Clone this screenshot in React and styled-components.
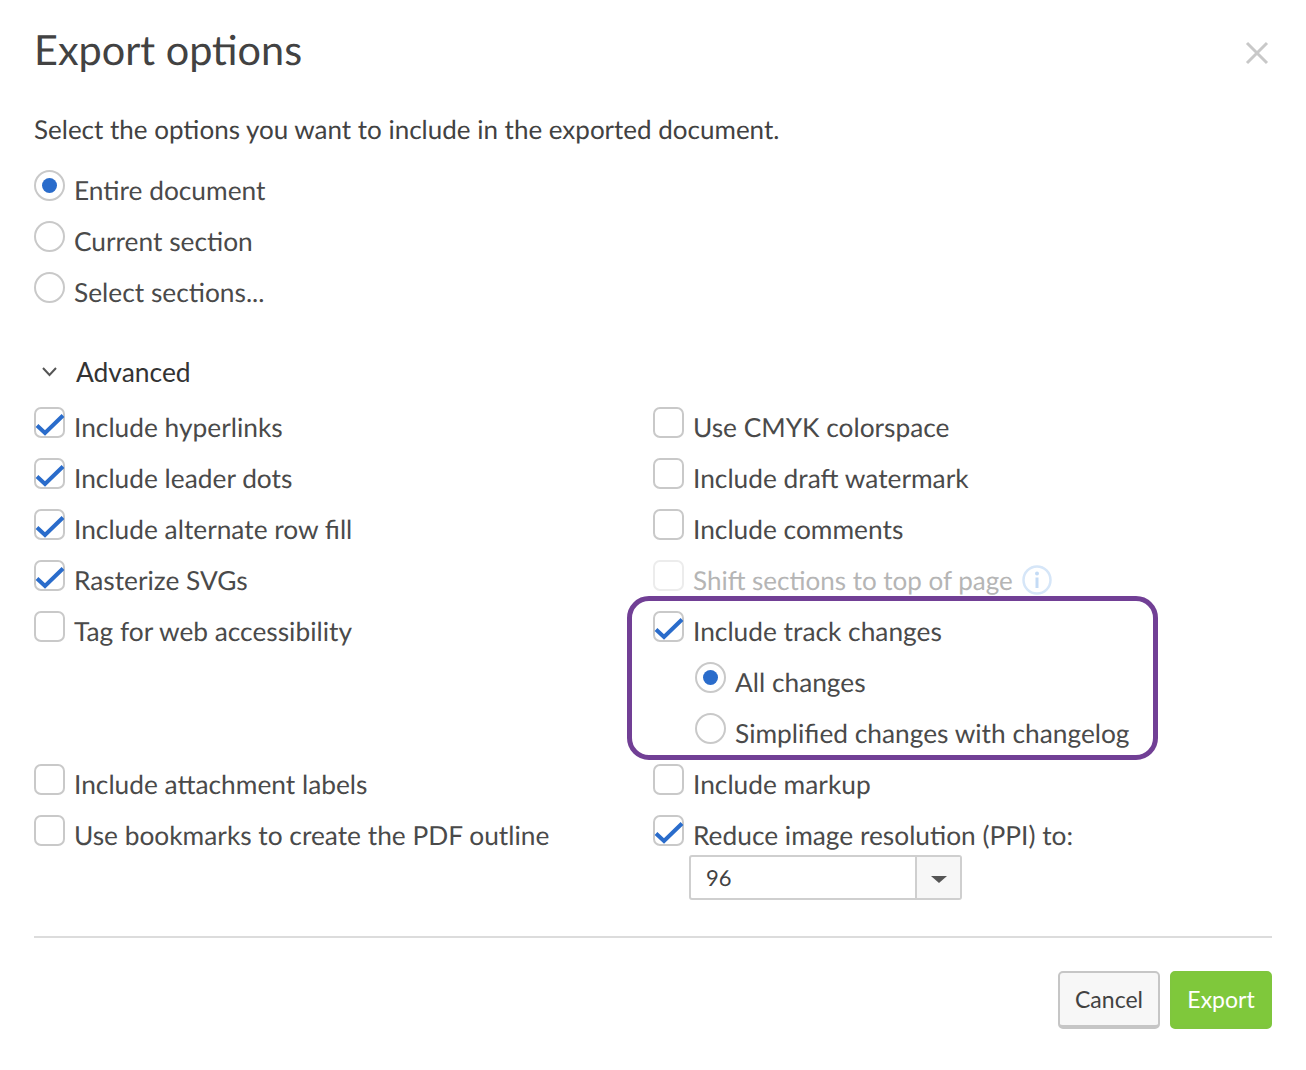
import React from 'react'
import styled, { createGlobalStyle } from 'styled-components'

const Global = createGlobalStyle`
  body {
    margin: 0;
    background: #fff;
    font-family: Lato, "Liberation Sans", sans-serif;
    color: #4a4a4a;
    text-rendering: geometricPrecision;
  }
`

const Dialog = styled.div`
  width: 1238px;
  height: 1070px;
  padding: 0 34px;
`

const Header = styled.header`
  height: 102px;
  display: flex;
  align-items: center;
  justify-content: space-between;
`

const Title = styled.h1`
  margin: -4px 0 0;
  font-size: 41.4px;
  font-weight: 400;
  color: #424242;
`

const Close = styled.button`
  width: 26px;
  height: 26px;
  margin: 3px 2px 0 0;
  padding: 0;
  border: 0;
  background: none;
  display: flex;
`

const Intro = styled.p`
  margin: 0 0 7px;
  height: 55px;
  line-height: 55px;
  font-size: 26px;
  color: #424242;
`

const Section = styled.div`
  display: flex;
  flex-direction: column;
`

const Row = styled.label`
  height: 51px;
  display: flex;
  align-items: center;
  gap: 9px;
  font-size: ${p => (p.$disabled ? '26px' : '26.3px')};
  padding-left: ${p => (p.$nested ? '42px' : '0')};
  color: ${p => (p.$disabled ? '#b5b5b5' : '#4a4a4a')};
`

const Box = styled.span`
  width: 31px;
  height: 31px;
  box-sizing: border-box;
  margin-top: -8px;
  flex: none;
  border: 2px solid ${p => (p.$disabled ? '#ececec' : '#c9c9c9')};
  border-radius: ${p => (p.$round ? '50%' : '7px')};
  display: flex;
  align-items: center;
  justify-content: center;
  position: relative;
`

const Dot = styled.span`
  width: 15px;
  height: 15px;
  border-radius: 50%;
  background: #2a6ccb;
`

const Tick = styled.svg`
  position: absolute;
  left: -2px;
  top: -2px;
  overflow: visible;
`

const Advanced = styled.button`
  margin-top: 29px;
  padding: 0;
  height: 51px;
  border: 0;
  background: none;
  display: flex;
  align-items: center;
  gap: 10px;
  font-family: inherit;
  font-size: 26.4px;
  color: #333;
`

const Columns = styled.div`
  display: grid;
  grid-template-columns: 619px 1fr;
  margin-top: 4px;
`

const Column = styled.div`
  display: flex;
  flex-direction: column;
`

const Spacer = styled.div`
  height: 102px;
`

const Highlight = styled.div`
  position: relative;

  &::after {
    content: '';
    position: absolute;
    top: -9px;
    left: -26px;
    width: 531px;
    height: 164px;
    box-sizing: border-box;
    border: 5px solid #713f95;
    border-radius: 22px;
    pointer-events: none;
  }
`

const Select = styled.div`
  width: 273px;
  height: 45px;
  box-sizing: border-box;
  margin: -5px 0 0 36px;
  border: 2px solid #cfcfcf;
  border-radius: 3px;
  display: flex;
`

const SelectValue = styled.span`
  flex: 1;
  padding-left: 15px;
  font-size: 22px;
  line-height: 42px;
  color: #424242;
`

const SelectArrow = styled.span`
  width: 43px;
  border-left: 2px solid #cfcfcf;
  background: #f7f7f7;
  display: flex;
  align-items: center;
  justify-content: center;

  &::after {
    content: '';
    margin-top: 3px;
    border-left: 8px solid transparent;
    border-right: 8px solid transparent;
    border-top: 7px solid #555;
  }
`

const Footer = styled.footer`
  margin-top: 36px;
  padding-top: 33px;
  border-top: 2px solid #dcdcdc;
  display: flex;
  justify-content: flex-end;
  gap: 10px;
`

const Button = styled.button`
  width: 102px;
  height: 58px;
  box-sizing: border-box;
  border-radius: 5px;
  font-family: inherit;
  font-size: 23px;
  border: 2px solid ${p => (p.$primary ? '#7fc63d' : '#c6c6c6')};
  border-bottom-width: 4px;
  background: ${p => (p.$primary ? '#7fc83b' : '#f7f7f7')};
  color: ${p => (p.$primary ? '#fff' : '#424242')};
`

const Check = ({ checked, disabled }) => (
  <Box $disabled={disabled}>
    {checked && (
      <Tick width="31" height="31" viewBox="0 0 31 31">
        <path d="M3 18.5 L11 26 L29 8.5" fill="none" stroke="#2a6ccb" strokeWidth="4" />
      </Tick>
    )}
  </Box>
)

const Radio = ({ checked }) => <Box $round>{checked && <Dot />}</Box>

const Option = ({ label, checked, disabled, children }) => (
  <Row $disabled={disabled}>
    <Check checked={checked} disabled={disabled} />
    {label}
    {children}
  </Row>
)

const Choice = ({ label, checked, nested }) => (
  <Row $nested={nested}>
    <Radio checked={checked} />
    {label}
  </Row>
)

export default function App() {
  return (
    <Dialog>
      <Global />
      <Header>
        <Title>Export options</Title>
        <Close aria-label="Close">
          <svg width="26" height="26" viewBox="0 0 26 26">
            <path d="M3 3 L23 23 M23 3 L3 23" stroke="#c8c8c8" strokeWidth="3" />
          </svg>
        </Close>
      </Header>
      <Intro>Select the options you want to include in the exported document.</Intro>
      <Section>
        <Choice label="Entire document" checked />
        <Choice label="Current section" />
        <Choice label="Select sections..." />
      </Section>
      <Advanced>
        <svg width="32" height="12" viewBox="0 0 32 12">
          <path d="M9 2 L15.5 9 L22 2" fill="none" stroke="#555" strokeWidth="2" />
        </svg>
        Advanced
      </Advanced>
      <Columns>
        <Column>
          <Option label="Include hyperlinks" checked />
          <Option label="Include leader dots" checked />
          <Option label="Include alternate row fill" checked />
          <Option label="Rasterize SVGs" checked />
          <Option label="Tag for web accessibility" />
          <Spacer />
          <Option label="Include attachment labels" />
          <Option label="Use bookmarks to create the PDF outline" />
        </Column>
        <Column>
          <Option label="Use CMYK colorspace" />
          <Option label="Include draft watermark" />
          <Option label="Include comments" />
          <Option label="Shift sections to top of page" disabled>
            <svg width="30" height="30" viewBox="0 0 30 30">
              <circle cx="15" cy="15" r="13.5" fill="none" stroke="#d6e6f8" strokeWidth="2.5" />
              <circle cx="15" cy="8.5" r="2" fill="#c4dbf5" />
              <path d="M15 12.5 V23" stroke="#c4dbf5" strokeWidth="3" />
            </svg>
          </Option>
          <Highlight>
            <Option label="Include track changes" checked />
            <Choice label="All changes" checked nested />
            <Choice label="Simplified changes with changelog" nested />
          </Highlight>
          <Option label="Include markup" />
          <Option label="Reduce image resolution (PPI) to:" checked />
          <Select>
            <SelectValue>96</SelectValue>
            <SelectArrow />
          </Select>
        </Column>
      </Columns>
      <Footer>
        <Button>Cancel</Button>
        <Button $primary>Export</Button>
      </Footer>
    </Dialog>
  )
}
